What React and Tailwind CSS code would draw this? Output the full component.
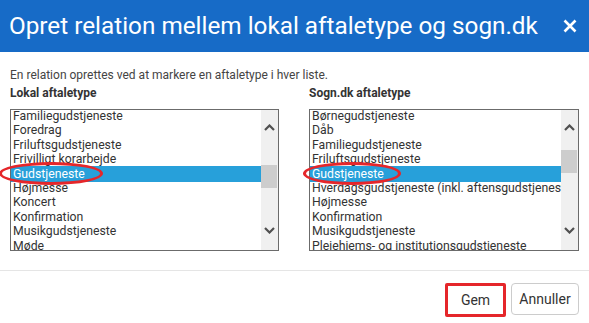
import React from "react";

const leftItems = [
  "Familiegudstjeneste",
  "Foredrag",
  "Friluftsgudstjeneste",
  "Frivilligt korarbejde",
  "Gudstjeneste",
  "Højmesse",
  "Koncert",
  "Konfirmation",
  "Musikgudstjeneste",
  "Møde",
];

const rightItems = [
  "Børnegudstjeneste",
  "Dåb",
  "Familiegudstjeneste",
  "Friluftsgudstjeneste",
  "Gudstjeneste",
  "Hverdagsgudstjeneste (inkl. aftensgudstjeneste)",
  "Højmesse",
  "Konfirmation",
  "Musikgudstjeneste",
  "Plejehjems- og institutionsgudstjeneste",
];

function Chevron({ up }) {
  return (
    <svg width="11" height="7" viewBox="0 0 11 7">
      <polyline
        points={up ? "1,6 5.5,1.5 10,6" : "1,1 5.5,5.5 10,1"}
        fill="none"
        stroke="#505050"
        strokeWidth="2.2"
      />
    </svg>
  );
}

function ListBox({ items, selected, thumbTop }) {
  return (
    <div className="relative flex h-[142px] border border-[#6b6b6b] bg-white">
      <div className="flex-1 overflow-hidden">
        <div className="-mt-[1px]">
          {items.map((it, i) =>
            i === selected ? (
              <div
                key={i}
                className="relative z-10 -my-[1px] h-[16.4px] whitespace-nowrap bg-[#27a0da] pl-[2px] text-[12.25px] leading-[16.4px] text-white"
              >
                {it}
              </div>
            ) : (
              <div
                key={i}
                className="h-[14.4px] whitespace-nowrap pl-[2px] text-[12.25px] leading-[14.4px] text-[#333]"
              >
                {it}
              </div>
            )
          )}
        </div>
      </div>
      <div className="relative w-[17px] bg-[#f0f0f0]">
        <div className="absolute left-0 right-0 top-[14px] flex justify-center">
          <Chevron up />
        </div>
        <div
          className="absolute left-0 right-[1px] h-[23px] bg-[#cdcdcd]"
          style={{ top: thumbTop }}
        />
        <div className="absolute left-0 right-0 top-[117px] flex justify-center">
          <Chevron />
        </div>
      </div>
    </div>
  );
}

export default function App() {
  return (
    <div
      className="relative h-[323px] w-[589px] overflow-hidden bg-white"
      style={{ fontFamily: "Roboto, 'Liberation Sans', sans-serif" }}
    >
      <div className="flex h-[52px] items-center justify-between bg-[#176bc7] pl-[9px] pr-[12px]">
        <div className="text-[24.3px] leading-[28px] text-white">
          Opret relation mellem lokal aftaletype og sogn.dk
        </div>
        <svg width="14" height="14" viewBox="0 0 14 14">
          <path d="M1.5 1.5 L12.5 12.5 M12.5 1.5 L1.5 12.5" stroke="white" strokeWidth="2.6" />
        </svg>
      </div>

      <div className="px-[10px]">
        <div className="mt-[16px] text-[12px] leading-[14px] text-[#444]">
          En relation oprettes ved at markere en aftaletype i hver liste.
        </div>
        <div className="mt-[4px] flex gap-[30px]">
          <div className="w-[269px]">
            <div className="text-[12px] font-bold leading-[14px] text-[#333]">Lokal aftaletype</div>
            <div className="mt-[9px]">
              <ListBox items={leftItems} selected={4} thumbTop={55} />
            </div>
          </div>
          <div className="w-[270px]">
            <div className="text-[12px] font-bold leading-[14px] text-[#333]">Sogn.dk aftaletype</div>
            <div className="mt-[9px]">
              <ListBox items={rightItems} selected={4} thumbTop={40} />
            </div>
          </div>
        </div>
      </div>

      <div className="mt-[19px] border-t border-[#e5e5e5]" />
      <div className="flex items-start justify-end gap-[5px] pr-[10px] pt-[12px]">
        <button className="flex h-[34px] w-[61px] items-center justify-center rounded-[2px] border-[3px] border-[#e5262a] bg-white text-[14px] text-[#333]">
          Gem
        </button>
        <button className="flex h-[32px] w-[68px] items-center justify-center rounded-[4px] border border-[#cccccc] bg-white text-[14px] text-[#333]">
          Annuller
        </button>
      </div>

      {/* annotation ellipses */}
      <div className="pointer-events-none absolute left-[-1px] top-[162px] z-20 h-[23px] w-[104px] rounded-[50%] border-[3.5px] border-[#e5262a]" />
      <div className="pointer-events-none absolute left-[303px] top-[162px] z-20 h-[23px] w-[98px] rounded-[50%] border-[3.5px] border-[#e5262a]" />
    </div>
  );
}
